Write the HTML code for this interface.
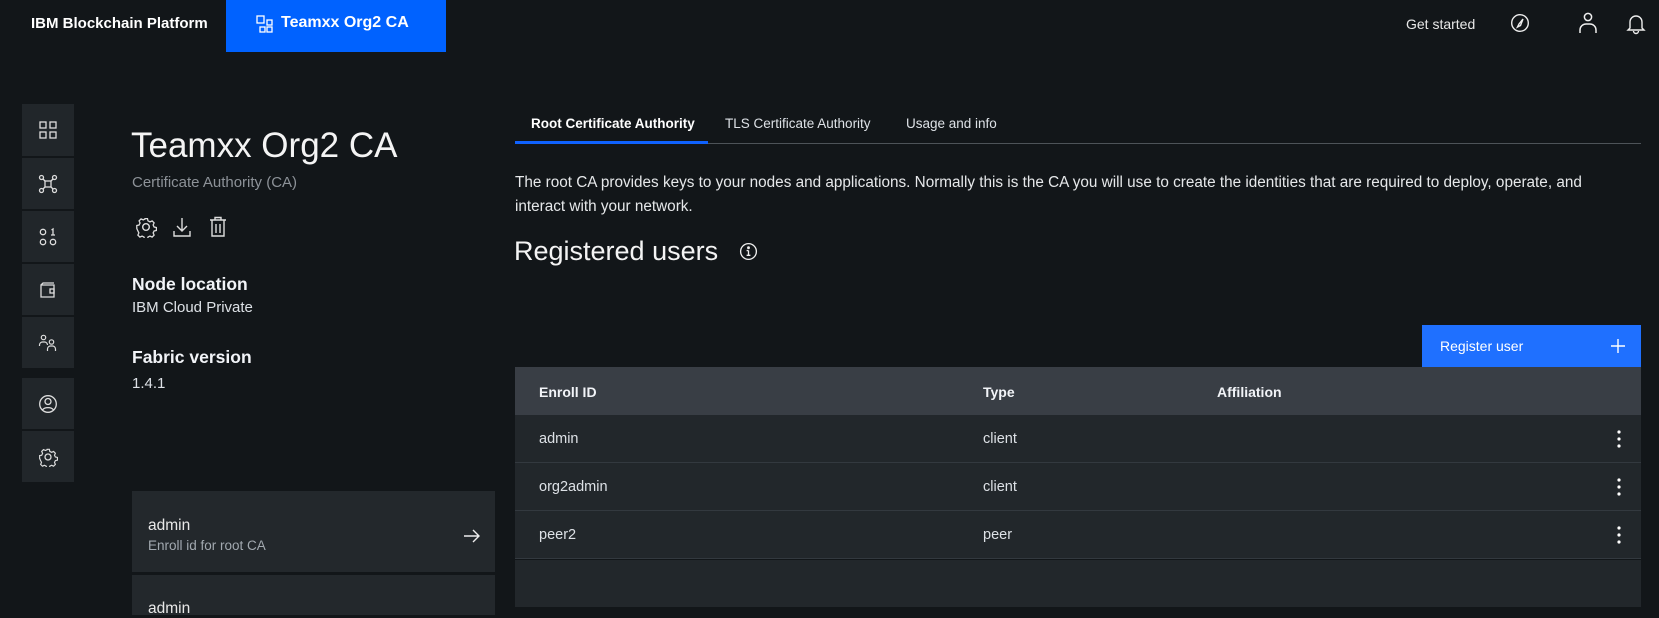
<!DOCTYPE html>
<html><head><meta charset="utf-8"><style>
*{margin:0;padding:0;box-sizing:border-box}
body{width:1659px;height:607px;overflow:hidden;background:#121619;font-family:"Liberation Sans",sans-serif;color:#f2f4f8;position:relative}
.a{position:absolute;white-space:nowrap}
.tile{position:absolute;left:22px;width:52px;background:#21262a;display:flex;align-items:center;justify-content:center}
svg{display:block}
.row{position:absolute;left:515px;width:1126px;height:48px;background:#22272b;border-bottom:1px solid #33393f;font-size:14.5px;color:#dde1e6}
.row span{position:absolute;top:16px}
</style></head><body>
<div class="a" style="left:31px;top:15px;font-size:15px;font-weight:bold;color:#fff">IBM Blockchain Platform</div>
<div class="a" style="left:226px;top:0;width:220px;height:52px;background:#0062ff"></div>
<svg class="a" style="left:256px;top:15px" width="18" height="20" viewBox="0 0 18 20" fill="none" stroke="#fff" stroke-width="1.3"><rect x="1" y="1" width="7" height="7"/><rect x="11" y="5" width="5" height="5"/><rect x="4" y="12" width="5" height="5"/><rect x="11" y="12" width="5" height="5"/></svg>
<div class="a" style="left:281px;top:14px;font-size:16px;font-weight:bold;color:#fff">Teamxx Org2 CA</div>
<div class="a" style="left:1406px;top:16px;font-size:14px;color:#e8e8e8">Get started</div>
<svg class="a" style="left:1510px;top:13px" width="20" height="20" viewBox="0 0 20 20" fill="none" stroke="#eee" stroke-width="1.4"><circle cx="10" cy="10" r="8.3"/><path d="M13 6l-4 5-1.5 3 3-1.5z"/></svg>
<svg class="a" style="left:1578px;top:12px" width="20" height="22" viewBox="0 0 20 22" fill="none" stroke="#eee" stroke-width="1.5"><circle cx="10" cy="5" r="3.6"/><path d="M2 21v-3a6 6 0 0 1 6-6h4a6 6 0 0 1 6 6v3"/></svg>
<svg class="a" style="left:1626px;top:13px" width="20" height="22" viewBox="0 0 20 22" fill="none" stroke="#eee" stroke-width="1.4"><path d="M4 15V9a6 6 0 0 1 12 0v6l2 2H2z"/><path d="M7.5 18a2.5 2.5 0 0 0 5 0"/></svg>

<div class="tile" style="top:104px;height:52px"><svg width="20" height="20" viewBox="0 0 20 20" fill="none" stroke="#ddd" stroke-width="1.3"><rect x="2" y="2" width="6" height="6"/><rect x="12" y="2" width="6" height="6"/><rect x="2" y="12" width="6" height="6"/><rect x="12" y="12" width="6" height="6"/></svg></div>
<div class="tile" style="top:158px;height:51px"><svg width="20" height="20" viewBox="0 0 20 20" fill="none" stroke="#ddd" stroke-width="1.3"><circle cx="3.5" cy="3.5" r="2"/><circle cx="16.5" cy="3.5" r="2"/><circle cx="3.5" cy="16.5" r="2"/><circle cx="16.5" cy="16.5" r="2"/><rect x="7" y="7" width="6" height="6"/><path d="M5 5l2 2M15 5l-2 2M5 15l2-2M15 15l-2-2"/></svg></div>
<div class="tile" style="top:211px;height:51px"><svg width="20" height="20" viewBox="0 0 20 20" fill="none" stroke="#ddd" stroke-width="1.3"><circle cx="5" cy="5" r="2.7"/><circle cx="5" cy="15" r="2.7"/><circle cx="15" cy="15" r="2.7"/><path d="M13.5 3l1.5-1v6M13 8h4"/></svg></div>
<div class="tile" style="top:264px;height:51px"><svg width="20" height="20" viewBox="0 0 20 20" fill="none" stroke="#ddd" stroke-width="1.3"><path d="M3 5h13v12H3zM3 5l2-2h11"/><rect x="12" y="9" width="4" height="4"/></svg></div>
<div class="tile" style="top:317px;height:51px"><svg width="20" height="20" viewBox="0 0 20 20" fill="none" stroke="#ddd" stroke-width="1.2"><circle cx="5.5" cy="4.5" r="2.2"/><path d="M1.5 13v-1a3 3 0 0 1 3-3h2a3 3 0 0 1 3 3"/><circle cx="13.5" cy="9" r="2.2"/><path d="M9.5 18v-2a3 3 0 0 1 3-3h2a3 3 0 0 1 3 3v2"/></svg></div>
<div class="tile" style="top:378px;height:51px"><svg width="20" height="20" viewBox="0 0 20 20" fill="none" stroke="#ddd" stroke-width="1.3"><circle cx="10" cy="10" r="8.3"/><circle cx="10" cy="7.5" r="3"/><path d="M4.5 16a6 4 0 0 1 11 0"/></svg></div>
<div class="tile" style="top:431px;height:51px"><svg width="20" height="20" viewBox="0 0 20 20" fill="none" stroke="#ddd" stroke-width="1.3"><circle cx="10" cy="10" r="3"/><path d="M8.5 1.5h3l.5 2.3 2 1 2.2-1 2 2-1 2.2 1 2 2.3.5v3l-2.3.5-1 2 1 2.2-2 2-2.2-1-2 1-.5 2.3h-3l-.5-2.3-2-1-2.2 1-2-2 1-2.2-1-2L.7 11.5v-3L3 8l1-2-1-2.2 2-2 2.2 1 2-1z" transform="translate(1 1) scale(.9)"/></svg></div>

<div class="a" style="left:131px;top:126px;font-size:35px;font-weight:300;color:#f4f4f4">Teamxx Org2 CA</div>
<div class="a" style="left:132px;top:174px;font-size:15px;color:#8d9298">Certificate Authority (CA)</div>
<svg class="a" style="left:135px;top:216px" width="22" height="22" viewBox="0 0 20 20" fill="none" stroke="#ddd" stroke-width="1.3"><circle cx="10" cy="10" r="3"/><path d="M8.5 1.5h3l.5 2.3 2 1 2.2-1 2 2-1 2.2 1 2 2.3.5v3l-2.3.5-1 2 1 2.2-2 2-2.2-1-2 1-.5 2.3h-3l-.5-2.3-2-1-2.2 1-2-2 1-2.2-1-2L.7 11.5v-3L3 8l1-2-1-2.2 2-2 2.2 1 2-1z" transform="translate(1 1) scale(.9)"/></svg>
<svg class="a" style="left:172px;top:216px" width="20" height="22" viewBox="0 0 20 22" fill="none" stroke="#ddd" stroke-width="1.4"><path d="M10 2v13M5 10l5 5 5-5M2 15v5h16v-5"/></svg>
<svg class="a" style="left:208px;top:216px" width="20" height="22" viewBox="0 0 20 22" fill="none" stroke="#ddd" stroke-width="1.4"><path d="M2 4h16M7 4V1.5h6V4M4 4v16h12V4M8 8v9M12 8v9"/></svg>
<div class="a" style="left:132px;top:274px;font-size:17.5px;font-weight:bold">Node location</div>
<div class="a" style="left:132px;top:299px;font-size:15px;color:#dde1e6">IBM Cloud Private</div>
<div class="a" style="left:132px;top:347px;font-size:17.5px;font-weight:bold">Fabric version</div>
<div class="a" style="left:132px;top:375px;font-size:15px;color:#dde1e6">1.4.1</div>

<div class="a" style="left:132px;top:491px;width:363px;height:81px;background:#23282c"></div>
<div class="a" style="left:148px;top:517px;font-size:15.5px;color:#e8e8e8">admin</div>
<div class="a" style="left:148px;top:538px;font-size:13.5px;color:#a2a9b0">Enroll id for root CA</div>
<svg class="a" style="left:463px;top:528px" width="18" height="16" viewBox="0 0 18 16" fill="none" stroke="#eee" stroke-width="1.4"><path d="M1 8h15M10 2l6 6-6 6"/></svg>
<div class="a" style="left:132px;top:575px;width:363px;height:40px;background:#23282c"></div>
<div class="a" style="left:148px;top:600px;font-size:15.5px;color:#e8e8e8">admin</div>

<div class="a" style="left:515px;top:143px;width:1126px;height:1px;background:#4d5358"></div>
<div class="a" style="left:515px;top:141px;width:193px;height:3px;background:#0f62fe"></div>
<div class="a" style="left:531px;top:116px;font-size:13.5px;font-weight:bold;color:#fff">Root Certificate Authority</div>
<div class="a" style="left:725px;top:116px;font-size:13.5px;color:#dde1e6">TLS Certificate Authority</div>
<div class="a" style="left:906px;top:116px;font-size:13.5px;color:#dde1e6">Usage and info</div>
<div class="a" style="left:515px;top:171px;font-size:15.3px;color:#e6e8ea;line-height:24px;white-space:normal;width:1100px">The root CA provides keys to your nodes and applications. Normally this is the CA you will use to create the identities that are required to deploy, operate, and interact with your network.</div>
<div class="a" style="left:514px;top:236px;font-size:27px;font-weight:300;color:#f4f4f4">Registered users</div>
<svg class="a" style="left:739px;top:242px" width="19" height="19" viewBox="0 0 20 20" fill="none" stroke="#eee" stroke-width="1.4"><circle cx="10" cy="10" r="8.3"/><path d="M10 9v5M8 14h4M8 9h2"/><circle cx="10" cy="6" r=".8" fill="#eee"/></svg>

<div class="a" style="left:1422px;top:325px;width:219px;height:42px;background:#1f70ff"></div>
<div class="a" style="left:1440px;top:338px;font-size:14px;color:#fff">Register user</div>
<svg class="a" style="left:1611px;top:339px" width="14" height="14" viewBox="0 0 14 14" stroke="#fff" stroke-width="1.4"><path d="M7 0v14M0 7h14"/></svg>

<div class="a" style="left:515px;top:367px;width:1126px;height:48px;background:#393e45"></div>
<div class="a" style="left:539px;top:384px;font-size:14px;font-weight:bold">Enroll ID</div>
<div class="a" style="left:983px;top:384px;font-size:14px;font-weight:bold">Type</div>
<div class="a" style="left:1217px;top:384px;font-size:14px;font-weight:bold">Affiliation</div>
<div class="row" style="top:415px"><span style="left:24px">admin</span><span style="left:468px">client</span></div>
<div class="row" style="top:463px"><span style="left:24px">org2admin</span><span style="left:468px">client</span></div>
<div class="row" style="top:511px"><span style="left:24px">peer2</span><span style="left:468px">peer</span></div>
<div class="a" style="left:515px;top:560px;width:1126px;height:47px;background:#22272b"></div>
<svg class="a" style="left:1616px;top:430px" width="6" height="18" viewBox="0 0 6 18" fill="#fff"><circle cx="3" cy="2" r="1.6"/><circle cx="3" cy="9" r="1.6"/><circle cx="3" cy="16" r="1.6"/></svg>
<svg class="a" style="left:1616px;top:478px" width="6" height="18" viewBox="0 0 6 18" fill="#fff"><circle cx="3" cy="2" r="1.6"/><circle cx="3" cy="9" r="1.6"/><circle cx="3" cy="16" r="1.6"/></svg>
<svg class="a" style="left:1616px;top:526px" width="6" height="18" viewBox="0 0 6 18" fill="#fff"><circle cx="3" cy="2" r="1.6"/><circle cx="3" cy="9" r="1.6"/><circle cx="3" cy="16" r="1.6"/></svg>
</body></html>
